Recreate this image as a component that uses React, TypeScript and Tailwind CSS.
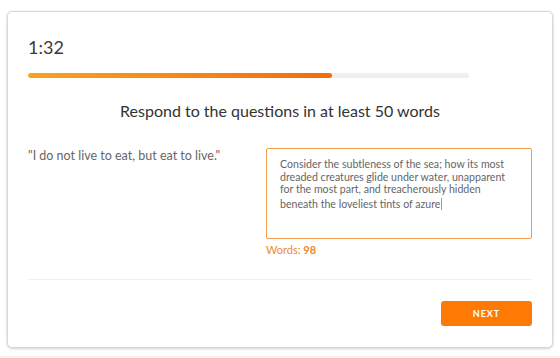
import React from "react";

// Timed writing question card
export default function App() {
  const elapsed = 69; // percent of timer used

  return (
    <div className="relative min-h-[358px] bg-white px-[7px] pt-[11px] font-['Lato','Open_Sans',sans-serif]">
      <div className="flex h-[337px] flex-col rounded-[5px] border border-[#d6d6d6] bg-white px-5 pt-[23px] shadow-[0_1px_3px_rgba(0,0,0,0.18)]">
        {/* Timer */}
        <div className="text-[18px] leading-6 text-[#3a3a3a]">1:32</div>
        <div className="mt-[14px] h-[5px] w-[441px] overflow-hidden rounded-full bg-[#efefef]">
          <div
            className="h-full rounded-full bg-gradient-to-r from-[#f9a21c] to-[#f56b0a]"
            style={{ width: `${elapsed}%` }}
          />
        </div>

        {/* Prompt */}
        <h1 className="mt-[22px] text-center text-[16px] leading-[22px] text-[#333]">
          Respond to the questions in at least 50 words
        </h1>

        <div className="mt-[26px] flex">
          <p className="flex-1 text-[12.5px] leading-4 text-[#666]">
            "I do not live to eat, but eat to live."
          </p>
          <div className="w-[266px]">
            <div className="h-[91px] rounded-[2px] border-[1.5px] border-[#f49b4c] px-[13px] pt-[9px] text-[10.6px] leading-[12.5px] text-[#666]">
              Consider the subtleness of the sea; how its most
              <br />
              dreaded creatures glide under water, unapparent
              <br />
              for the most part, and treacherously hidden
              <br />
              beneath the loveliest tints of azure
              <span className="ml-px inline-block h-[12px] w-px translate-y-[2px] bg-[#f08a2c]" />
            </div>
            <div className="mt-1 text-[11px] leading-[14px] text-[#f0892b]">
              Words: <span className="font-bold">98</span>
            </div>
          </div>
        </div>

        <div className="mt-[22px] h-px bg-[#efefef]" />

        <div className="mt-[21px] flex justify-end">
          <button className="h-[25px] w-[91px] rounded-[3px] bg-[#ff7a05] text-[9px] font-bold tracking-[1px] text-white">
            NEXT
          </button>
        </div>
      </div>
      <div className="absolute bottom-0 left-0 h-[2px] w-full bg-[#fbf3e2]" />
    </div>
  );
}
